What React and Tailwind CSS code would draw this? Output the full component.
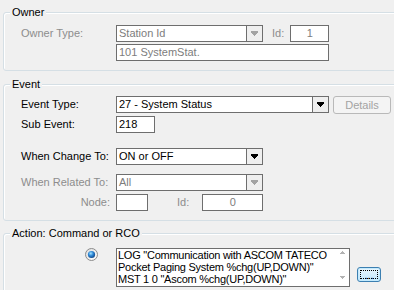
import React from 'react';

// win32-style event editor dialog

const Arrow = ({ disabled }) => (
  <svg width="7" height="5" viewBox="0 0 7 5" shapeRendering="crispEdges">
    <path
      d="M0 0h7v2H0zM1 2h5v1H1zM2 3h3v1H2zM3 4h1v1H3z"
      fill={disabled ? '#a3a3a3' : '#000'}
    />
  </svg>
);

const ScrollArrow = ({ up }) => (
  <svg width="7" height="4" viewBox="0 0 7 4" shapeRendering="crispEdges">
    <path
      d={up ? 'M3 0h1v1H3zM2 1h3v1H2zM1 2h5v1H1z' : 'M1 0h5v1H1zM2 1h3v1H2zM3 2h1v1H3z'}
      fill="#b3b3b3"
    />
  </svg>
);

const Combo = ({ value, className, disabled }) => (
  <div className={`flex h-[17px] border border-[#6e6e6e] bg-white ${className}`}>
    <div className={`flex-1 pl-[2px] leading-[15px] whitespace-nowrap overflow-hidden ${disabled ? 'text-[#7d7d7d]' : 'text-black'}`}>
      {value}
    </div>
    <div className="flex w-[16px] items-center justify-center border-l border-[#6e6e6e] bg-[#efefef]">
      <Arrow disabled={disabled} />
    </div>
  </div>
);

const Field = ({ value, className, disabled, center }) => (
  <div
    className={`h-[17px] border border-[#6e6e6e] bg-white px-[2px] leading-[15px] whitespace-nowrap ${
      center ? 'text-center' : ''
    } ${disabled ? 'text-[#7d7d7d]' : 'text-black'} ${className}`}
  >
    {value}
  </div>
);

const Label = ({ children, disabled, className = '' }) => (
  <div className={`w-[95px] leading-[17px] whitespace-nowrap ${disabled ? 'text-[#8d8d8d]' : 'text-black'} ${className}`}>
    {children}
  </div>
);

const Group = ({ title, className = '', children }) => (
  <div
    className={`relative -mr-[12px] rounded-[3px] border border-[#d5dfe5] shadow-[inset_1px_1px_0_#ffffff] pl-[17px] ${className}`}
  >
    <div className="absolute left-[6px] -top-[7px] bg-[#f0f0f0] px-[2px] leading-[13px] text-black whitespace-nowrap">
      {title}
    </div>
    {children}
  </div>
);

const Radio = () => (
  <svg width="13" height="13" viewBox="0 0 13 13">
    <defs>
      <linearGradient id="ring" x1="0" y1="0" x2="1" y2="1">
        <stop offset="0" stopColor="#dcdcdc" />
        <stop offset="1" stopColor="#ffffff" />
      </linearGradient>
      <radialGradient id="dot" cx="0.4" cy="0.35" r="0.7">
        <stop offset="0" stopColor="#a6e4ff" />
        <stop offset="0.45" stopColor="#2f8ad8" />
        <stop offset="1" stopColor="#0b3f80" />
      </radialGradient>
    </defs>
    <circle cx="6.5" cy="6.5" r="6" fill="url(#ring)" stroke="#8b8b8b" />
    <circle cx="6.5" cy="6.5" r="3.6" fill="url(#dot)" />
  </svg>
);

const App = () => {
  return (
    <div className="h-[290px] w-[394px] overflow-hidden bg-[#f0f0f0] pl-[3px] pt-[12px] font-['Liberation_Sans',Arial,sans-serif] text-[11px]">
      {/* Owner */}
      <Group title="Owner" className="pt-[12px] pb-[9px]">
        <div className="flex items-start">
          <Label disabled>Owner Type:</Label>
          <Combo value="Station Id" disabled className="w-[147px]" />
          <div className="ml-[9px] leading-[17px] text-[#8d8d8d]">Id:</div>
          <Field value="1" disabled center className="ml-[6px] w-[39px]" />
        </div>
        <div className="mt-[2px] flex">
          <div className="w-[95px]" />
          <Field value="101 SystemStat." disabled className="w-[213px]" />
        </div>
      </Group>

      {/* Event */}
      <Group title="Event" className="mt-[13px] pt-[11px] pb-[9px]">
        <div className="flex h-[18px] items-start">
          <Label>Event Type:</Label>
          <Combo value="27 - System Status" className="w-[213px]" />
          <div className="ml-[4px] h-[18px] w-[58px] rounded-[3px] border border-[#b9b9b9] bg-[#f4f4f4] text-center leading-[16px] text-[#a3a3a3]">
            Details
          </div>
        </div>
        <div className="mt-[2px] flex">
          <Label>Sub Event:</Label>
          <Field value="218" className="w-[39px]" />
        </div>
        <div className="mt-[15px] flex">
          <Label>When Change To:</Label>
          <Combo value="ON or OFF" className="w-[147px]" />
        </div>
        <div className="mt-[9px] flex">
          <Label disabled>When Related To:</Label>
          <Combo value="All" disabled className="w-[147px]" />
        </div>
        <div className="mt-[3px] flex">
          <Label disabled className="pr-[6px] text-right">Node:</Label>
          <Field value="" disabled className="w-[32px]" />
          <div className="ml-[29px] leading-[17px] text-[#8d8d8d]">Id:</div>
          <Field value="0" disabled center className="ml-[13px] w-[61px]" />
        </div>
      </Group>

      {/* Action */}
      <Group title="Action: Command or RCO" className="mt-[12px] pt-[14px] pb-[10px]">
        <div className="flex items-start">
          <div className="flex w-[95px] justify-end pr-[18px]">
            <Radio />
          </div>
          <div className="flex h-[39px] w-[234px] border border-[#6e6e6e] bg-white">
            <div className="flex-1 pl-[1px] leading-[12px] tracking-[-0.25px] text-black whitespace-nowrap overflow-hidden">
              <div>LOG "Communication with ASCOM TATECO</div>
              <div>Pocket Paging System %chg(UP,DOWN)"</div>
              <div>MST 1 0 "Ascom %chg(UP,DOWN)"</div>
            </div>
            <div className="flex w-[14px] flex-col items-center justify-between pt-[2px] pb-[6px]">
              <ScrollArrow up />
              <ScrollArrow />
            </div>
          </div>
          <div className="relative ml-[7px] mt-[19px] flex h-[15px] w-[24px] items-end justify-center rounded-[3px] border border-[#3c7fb1] bg-gradient-to-b from-[#eaf6fd] to-[#bee6fd] shadow-[inset_0_0_0_1px_#c4eafd] leading-[10px] text-black">
            <div className="absolute inset-[2px] border border-dotted border-black" />
            <span className="pb-[1px]">...</span>
          </div>
        </div>
      </Group>
    </div>
  );
};

export default App;
